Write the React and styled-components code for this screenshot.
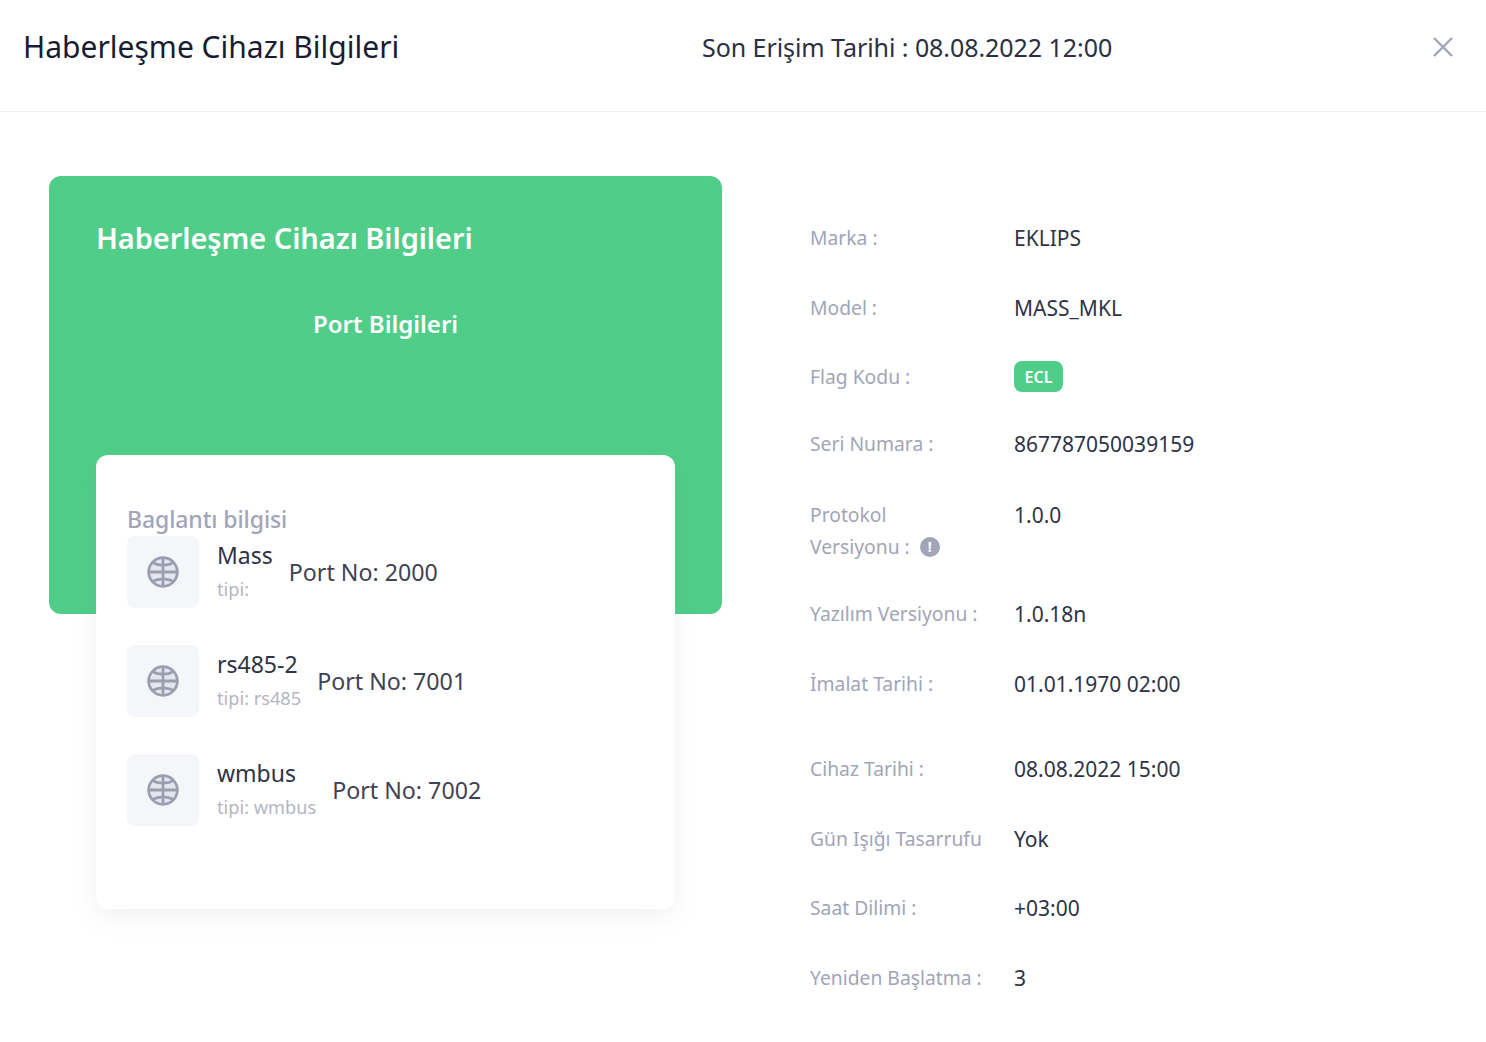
import React from 'react';
import styled, { createGlobalStyle } from 'styled-components';

const GlobalStyle = createGlobalStyle`
    html, body {
        margin: 0;
        padding: 0;
        background: #fff;
    }
    body {
        font-family: "Noto Sans", "Open Sans", sans-serif;
    }
`;

const Modal = styled.div`
    width: 1486px;
    height: 1042px;
    background: #fff;
    overflow: hidden;
`;

const Header = styled.header`
    display: grid;
    grid-template-columns: 679px 1fr 54px;
    align-items: center;
    height: 112px;
    padding: 0 0 18px 23px;
    box-sizing: border-box;
    border-bottom: 1px solid #eff2f5;
`;

const HeaderTitle = styled.h1`
    margin: 0;
    font-size: 30px;
    font-weight: 400;
    color: #181c32;
`;

const LastSeen = styled.div`
    font-size: 25px;
    letter-spacing: -0.06px;
    color: #2b2f42;
`;

const CloseIcon = styled.svg`
    width: 22px;
    height: 22px;
    color: #a1a5b7;
`;

const Body = styled.main`
    display: flex;
    padding: 64px 0 0 49px;
`;

const LeftColumn = styled.section`
    width: 673px;
    flex: none;
`;

const GreenCard = styled.div`
    height: 438px;
    box-sizing: border-box;
    padding: 42px 47px 0;
    background: #50cd89;
    border-radius: 12px;
    color: #fff;
`;

const GreenTitle = styled.h2`
    margin: 0;
    font-size: 29px;
    line-height: 40px;
    font-weight: 600;
    letter-spacing: -0.06px;
`;

const GreenSubtitle = styled.h3`
    margin: 50px 0 0;
    font-size: 24px;
    line-height: 32px;
    font-weight: 600;
    text-align: center;
`;

const PortCard = styled.div`
    width: 579px;
    height: 454px;
    box-sizing: border-box;
    margin: -159px 0 0 47px;
    padding: 48px 31px 0;
    position: relative;
    background: #fff;
    border-radius: 12px;
    box-shadow: 0 8px 24px rgba(120, 130, 150, 0.1);
`;

const PortHeading = styled.div`
    font-size: 23px;
    line-height: 33px;
    font-weight: 500;
    letter-spacing: -0.1px;
    color: #a1a5b7;
`;

const PortList = styled.div`
    display: flex;
    flex-direction: column;
    gap: 37px;
`;

const PortRow = styled.div`
    display: flex;
    align-items: center;
`;

const PortTile = styled.div`
    display: flex;
    align-items: center;
    justify-content: center;
    flex: none;
    width: 72px;
    height: 72px;
    margin-right: 18px;
    background: #f5f6f9;
    border-radius: 8px;
`;

const PortText = styled.div`
    display: flex;
    flex-direction: column;
    gap: 6px;
    margin: -2px 16px 0 0;
`;

const PortName = styled.div`
    font-size: 23px;
    line-height: 30px;
    color: #2f3347;
`;

const PortType = styled.div`
    font-size: 18.2px;
    line-height: 26px;
    color: #b5b5c3;
`;

const PortNumber = styled.div`
    font-size: 23.2px;
    color: #3f4254;
`;

const DetailList = styled.dl`
    display: flex;
    flex-direction: column;
    margin: 46px 0 0 88px;
`;

const DetailRow = styled.div`
    display: grid;
    grid-template-columns: 204px 1fr;
    align-items: start;
    height: ${props => props.$height}px;
`;

const DetailLabel = styled.dt`
    font-size: 19.3px;
    line-height: 32px;
    color: #a1a5b7;
`;

const DetailValue = styled.dd`
    margin: 0;
    font-size: 21px;
    line-height: 32px;
    color: #2f3347;
`;

const FlagBadge = styled.span`
    display: flex;
    align-items: center;
    justify-content: center;
    width: 49px;
    height: 31px;
    background: #50cd89;
    border-radius: 8px;
    color: #fff;
    font-size: 16px;
    font-weight: 600;
`;

const InfoDot = styled.span`
    display: inline-flex;
    align-items: center;
    justify-content: center;
    width: 20px;
    height: 20px;
    margin-left: 10px;
    vertical-align: 2px;
    background: #a1a5b7;
    border-radius: 50%;
    color: #fff;
    font-size: 14px;
    font-weight: 700;
    line-height: 1;
`;

const GlobeIcon = () => (
    <svg width="34" height="34" viewBox="0 0 32 32" fill="none" stroke="#9a9eae" strokeWidth="2.6">
        <circle cx="16" cy="16" r="13.5" fill="#e4e6ef" />
        <path d="M2.500 16h27M16 2.500v27" />
        <path d="M6 7c6 3.500 14 3.500 20 0M6 25c6-3.500 14-3.500 20 0" />
    </svg>
);

const ports = [
    { name: 'Mass', type: 'tipi:', port: 'Port No: 2000' },
    { name: 'rs485-2', type: 'tipi: rs485', port: 'Port No: 7001' },
    { name: 'wmbus', type: 'tipi: wmbus', port: 'Port No: 7002' },
];

const App = () => {
    return (
        <Modal>
            <GlobalStyle />
            <Header>
                <HeaderTitle>Haberleşme Cihazı Bilgileri</HeaderTitle>
                <LastSeen>Son Erişim Tarihi : 08.08.2022 12:00</LastSeen>
                <CloseIcon viewBox="0 0 22 22" fill="none" stroke="currentColor" strokeWidth="2.4">
                    <path d="M2 2l18 18M20 2L2 20" />
                </CloseIcon>
            </Header>
            <Body>
                <LeftColumn>
                    <GreenCard>
                        <GreenTitle>Haberleşme Cihazı Bilgileri</GreenTitle>
                        <GreenSubtitle>Port Bilgileri</GreenSubtitle>
                    </GreenCard>
                    <PortCard>
                        <PortHeading>Baglantı bilgisi</PortHeading>
                        <PortList>
                            {ports.map(item => (
                                <PortRow key={item.name}>
                                    <PortTile><GlobeIcon /></PortTile>
                                    <PortText>
                                        <PortName>{item.name}</PortName>
                                        <PortType>{item.type}</PortType>
                                    </PortText>
                                    <PortNumber>{item.port}</PortNumber>
                                </PortRow>
                            ))}
                        </PortList>
                    </PortCard>
                </LeftColumn>
                <DetailList>
                    <DetailRow $height={70}><DetailLabel>Marka :</DetailLabel><DetailValue>EKLIPS</DetailValue></DetailRow>
                    <DetailRow $height={69}><DetailLabel>Model :</DetailLabel><DetailValue>MASS_MKL</DetailValue></DetailRow>
                    <DetailRow $height={67}><DetailLabel>Flag Kodu :</DetailLabel><DetailValue><FlagBadge>ECL</FlagBadge></DetailValue></DetailRow>
                    <DetailRow $height={71}><DetailLabel>Seri Numara :</DetailLabel><DetailValue>867787050039159</DetailValue></DetailRow>
                    <DetailRow $height={99}>
                        <DetailLabel>Protokol<br />Versiyonu :<InfoDot>!</InfoDot></DetailLabel>
                        <DetailValue>1.0.0</DetailValue>
                    </DetailRow>
                    <DetailRow $height={70}><DetailLabel>Yazılım Versiyonu :</DetailLabel><DetailValue>1.0.18n</DetailValue></DetailRow>
                    <DetailRow $height={85}><DetailLabel>İmalat Tarihi :</DetailLabel><DetailValue>01.01.1970 02:00</DetailValue></DetailRow>
                    <DetailRow $height={70}><DetailLabel>Cihaz Tarihi :</DetailLabel><DetailValue>08.08.2022 15:00</DetailValue></DetailRow>
                    <DetailRow $height={69}><DetailLabel>Gün Işığı Tasarrufu</DetailLabel><DetailValue>Yok</DetailValue></DetailRow>
                    <DetailRow $height={70}><DetailLabel>Saat Dilimi :</DetailLabel><DetailValue>+03:00</DetailValue></DetailRow>
                    <DetailRow $height={40}><DetailLabel>Yeniden Başlatma :</DetailLabel><DetailValue>3</DetailValue></DetailRow>
                </DetailList>
            </Body>
        </Modal>
    );
};

export default App;
